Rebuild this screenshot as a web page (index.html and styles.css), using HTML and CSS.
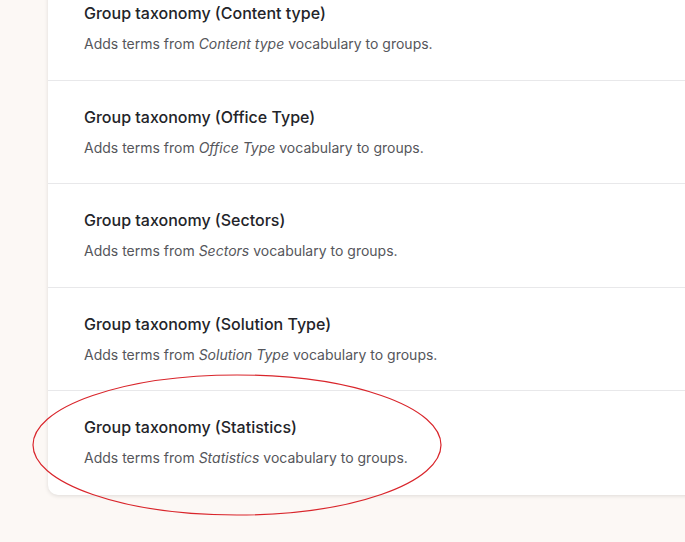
FILE: index.html
```html
<!DOCTYPE html>
<html lang="en">
<head>
  <meta charset="UTF-8" />
  <meta name="viewport" content="width=device-width, initial-scale=1.0"/>
  <title>Group taxonomy plugins</title>
  <link rel="stylesheet" href="styles.css">
</head>
<body>
  <div class="page">
    <ul class="plugin-list">
      <li class="plugin">
        <h3>Group taxonomy (Content type)</h3>
        <p>Adds terms from <em>Content type</em> vocabulary to groups.</p>
      </li>
      <li class="plugin">
        <h3>Group taxonomy (Office Type)</h3>
        <p>Adds terms from <em>Office Type</em> vocabulary to groups.</p>
      </li>
      <li class="plugin">
        <h3>Group taxonomy (Sectors)</h3>
        <p>Adds terms from <em>Sectors</em> vocabulary to groups.</p>
      </li>
      <li class="plugin">
        <h3>Group taxonomy (Solution Type)</h3>
        <p>Adds terms from <em>Solution Type</em> vocabulary to groups.</p>
      </li>
      <li class="plugin">
        <h3>Group taxonomy (Statistics)</h3>
        <p>Adds terms from <em>Statistics</em> vocabulary to groups.</p>
      </li>
    </ul>

    <svg class="highlight" width="420" height="150" viewBox="0 0 420 150">
      <ellipse cx="205" cy="71" rx="204" ry="70" fill="none" stroke="#d9252b" stroke-width="1.2"/>
    </svg>
  </div>
</body>
</html>
```

FILE: styles.css
```css
body {
  margin: 0;
  padding: 0;
  font-family: Inter, "Noto Sans", sans-serif;
  background: #fcf8f5;
  height: 542px;
  overflow: hidden;
}
.page {
  position: relative;
  display: flow-root;
  padding-left: 48px;
}
.plugin-list {
  list-style: none;
  margin: -23px 0 0 0;
  padding: 0;
  background: #fff;
  border-radius: 0 0 0 10px;
  box-shadow: 0 1px 4px rgba(0, 0, 0, 0.12);
  width: 660px;
}
.plugin {
  padding: 24px 36px 25.5px 36px;
  border-top: 1px solid #e8e8ea;
}
.plugin:first-child {
  border-top: none;
  padding-top: 24px;
}
.plugin:last-child {
  padding-bottom: 27px;
}
.plugin h3 {
  margin: 0;
  font-size: 16px;
  line-height: 24px;
  font-weight: 500;
  color: #232429;
}
.plugin p {
  margin: 9px 0 0 0;
  font-size: 14px;
  line-height: 20px;
  color: #55565b;
}
.highlight {
  position: absolute;
  left: 32px;
  top: 374px;
}
```
